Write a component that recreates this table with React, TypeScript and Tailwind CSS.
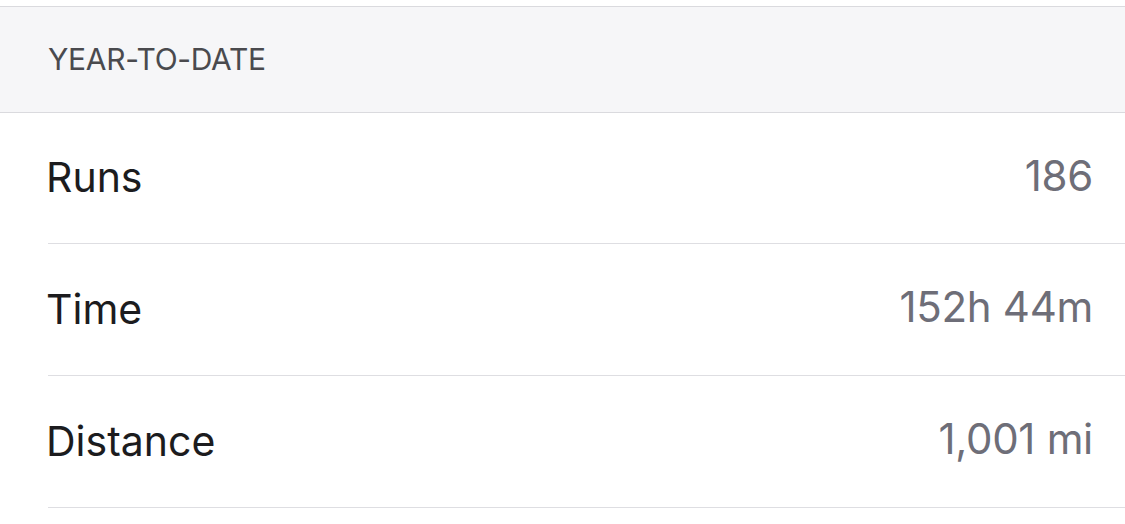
export default function App() {
  const rows = [
    { label: "Runs", value: "186", h: "h-[131px]" },
    { label: "Time", value: "152h 44m", h: "h-[132px]" },
    { label: "Distance", value: "1,001 mi", h: "h-[132px]" },
  ];
  return (
    <div
      className="w-[1125px] h-[524px] bg-white pt-[6px] overflow-hidden"
      style={{ fontFamily: 'Inter, "Noto Sans", sans-serif' }}
    >
      <div className="h-[107px] border-y border-[#dadade] bg-[#f6f6f8] flex items-center pl-12">
        <span className="text-[30px] text-[#4a4a4e] tracking-[-0.3px]">YEAR-TO-DATE</span>
      </div>
      <div className="ml-12">
        {rows.map((r) => (
          <div
            key={r.label}
            className={`${r.h} border-b border-[#dedee2] flex items-center justify-between pr-8`}
          >
            <span className="text-[41px] text-[#1c1c1e] -ml-[2px]">{r.label}</span>
            <span className="text-[42px] text-[#6e6e78] pb-[6px] tracking-[-0.3px]">{r.value}</span>
          </div>
        ))}
      </div>
    </div>
  );
}
